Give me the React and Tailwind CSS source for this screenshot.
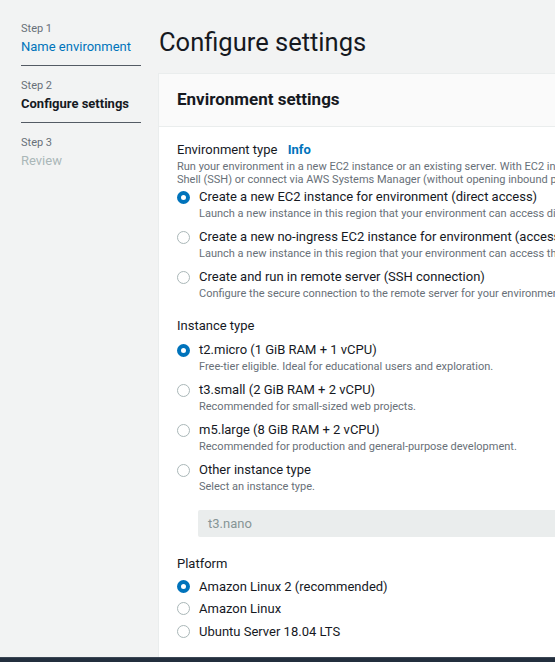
import React from 'react';

const steps = [
    { step: 'Step 1', name: 'Name environment', state: 'done' },
    { step: 'Step 2', name: 'Configure settings', state: 'current' },
    { step: 'Step 3', name: 'Review', state: 'todo' },
];

const envTypes = [
    {
        label: 'Create a new EC2 instance for environment (direct access)',
        hint: 'Launch a new instance in this region that your environment can access directly via SSH.',
        checked: true,
    },
    {
        label: 'Create a new no-ingress EC2 instance for environment (access via Systems Manager)',
        hint: 'Launch a new instance in this region that your environment can access through Systems Manager.',
    },
    {
        label: 'Create and run in remote server (SSH connection)',
        hint: 'Configure the secure connection to the remote server for your environment.',
    },
];

const instanceTypes = [
    { label: 't2.micro (1 GiB RAM + 1 vCPU)', hint: 'Free-tier eligible. Ideal for educational users and exploration.', checked: true },
    { label: 't3.small (2 GiB RAM + 2 vCPU)', hint: 'Recommended for small-sized web projects.' },
    { label: 'm5.large (8 GiB RAM + 2 vCPU)', hint: 'Recommended for production and general-purpose development.' },
    { label: 'Other instance type', hint: 'Select an instance type.' },
];

const platforms = [
    { label: 'Amazon Linux 2 (recommended)', checked: true },
    { label: 'Amazon Linux' },
    { label: 'Ubuntu Server 18.04 LTS' },
];

const Radio = ({ checked }) => (
    <span
        className={`block w-[13px] h-[13px] rounded-full bg-white shrink-0 ${checked ? 'border-[4px] border-[#0073bb]' : 'border-[1.5px] border-[#aab7b8]'
            }`}
    ></span>
);

const Option = ({ label, hint, checked }) => (
    <div className="flex items-start">
        <div className="w-[22px] h-[18px] flex items-center shrink-0">
            <Radio checked={checked} />
        </div>
        <div className="min-w-0">
            <div className="text-[13px] leading-[18px] text-[#16191f] whitespace-nowrap">{label}</div>
            <div className="text-[11px] leading-[15px] text-[#687078] whitespace-nowrap">{hint}</div>
        </div>
    </div>
);

const PlainOption = ({ label, checked }) => (
    <div className="flex items-center h-[22.5px]">
        <div className="w-[22px] flex items-center shrink-0">
            <Radio checked={checked} />
        </div>
        <span className="text-[13px] text-[#16191f] whitespace-nowrap">{label}</span>
    </div>
);

export default function App() {
    return (
        <div className="w-[555px] h-[662px] overflow-hidden bg-[#f2f3f3] flex flex-col font-['Roboto',sans-serif]">
            <div className="flex flex-1 min-h-0">
                {/* wizard steps */}
                <aside className="w-[158px] shrink-0 pl-[21px] pt-[21px]">
                    {steps.map((s, idx) => (
                        <div key={s.step} className={`w-[120px] pb-[8px] ${idx > 0 ? 'mt-[12px]' : ''} ${idx < 2 ? 'border-b border-[#545b64]' : ''}`}>
                            <div className="text-[11px] leading-[16px] text-[#687078]">{s.step}</div>
                            <div
                                className={`text-[13px] leading-[20px] ${s.state === 'done' ? 'text-[#0073bb]' : s.state === 'current' ? 'font-bold text-[#16191f]' : 'text-[#aab7b8]'
                                    }`}
                            >
                                {s.name}
                            </div>
                        </div>
                    ))}
                </aside>

                <main className="flex-1 min-w-0 flex flex-col">
                    <h1 className="pt-[27px] pl-[1px] text-[25.5px] leading-[30px] text-[#16191f]">Configure settings</h1>
                    <section className="mt-[16px] w-[520px] flex-1 bg-white border-l border-t border-[#eaeded] flex flex-col">
                        <div className="h-[53px] bg-[#fafafa] border-b border-[#eaeded] px-[18px] flex items-center shrink-0">
                            <h2 className="text-[17px] font-bold text-[#16191f]">Environment settings</h2>
                        </div>

                        <div className="px-[18px] pt-[13px]">
                            <div className="text-[13px] leading-[20px] text-[#16191f]">
                                Environment type <span className="ml-[7px] font-bold text-[#0073bb]">Info</span>
                            </div>
                            <div className="text-[11px] leading-[13px] text-[#687078] whitespace-nowrap">
                                Run your environment in a new EC2 instance or an existing server. With EC2 instances, you can connect directly through Secure
                                <br />
                                Shell (SSH) or connect via AWS Systems Manager (without opening inbound ports).
                            </div>
                            <div className="mt-[2px] flex flex-col gap-[7px]">
                                {envTypes.map(o => (
                                    <Option key={o.label} {...o} />
                                ))}
                            </div>

                            <div className="mt-[15px] text-[13px] leading-[20px] text-[#16191f]">Instance type</div>
                            <div className="mt-[5px] flex flex-col gap-[7px]">
                                {instanceTypes.map(o => (
                                    <Option key={o.label} {...o} />
                                ))}
                            </div>
                            <div className="mt-[16px] ml-[21px] h-[27px] rounded-[2px] bg-[#eaeded] pl-[10px] flex items-center text-[13px] text-[#879596]">
                                t3.nano
                            </div>

                            <div className="mt-[17px] text-[13px] leading-[20px] text-[#16191f]">Platform</div>
                            <div className="mt-[1px] flex flex-col">
                                {platforms.map(o => (
                                    <PlainOption key={o.label} {...o} />
                                ))}
                            </div>
                        </div>
                    </section>
                </main>
            </div>
            <div className="h-[5px] shrink-0 bg-[#232f3e] border-t border-[#3b4654]"></div>
        </div>
    );
}
